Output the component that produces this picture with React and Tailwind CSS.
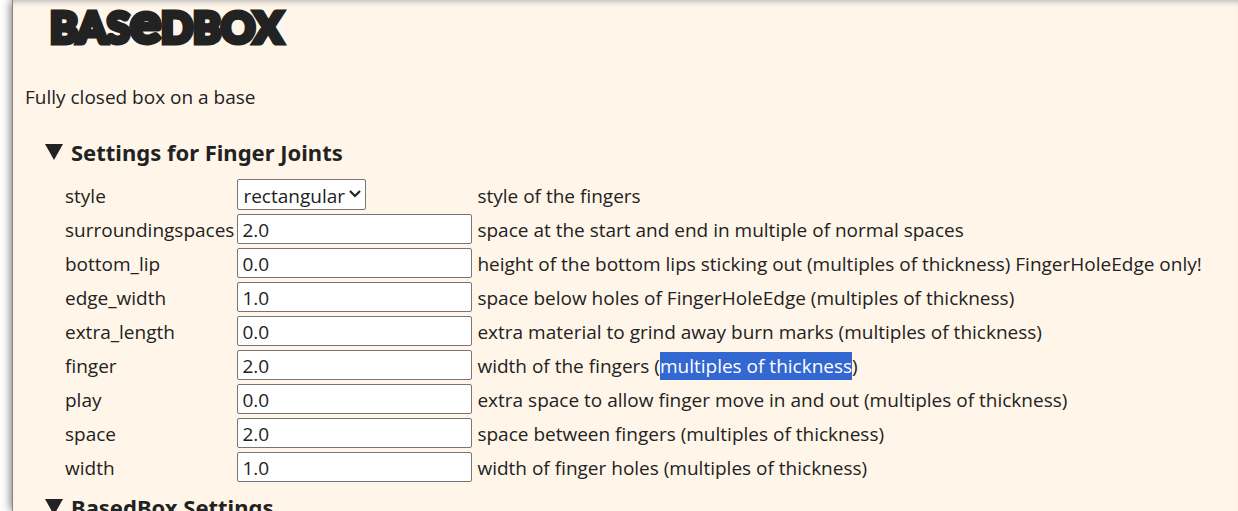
const fingerJoints = [
  { name: "surroundingspaces", value: "2.0", help: "space at the start and end in multiple of normal spaces" },
  { name: "bottom_lip", value: "0.0", help: "height of the bottom lips sticking out (multiples of thickness) FingerHoleEdge only!" },
  { name: "edge_width", value: "1.0", help: "space below holes of FingerHoleEdge (multiples of thickness)" },
  { name: "extra_length", value: "0.0", help: "extra material to grind away burn marks (multiples of thickness)" },
  {
    name: "finger",
    value: "2.0",
    help: (
      <>
        width of the fingers (
        <mark className="inline-block h-7 bg-[#3367d1] leading-7 text-white">multiples of thickness</mark>)
      </>
    ),
  },
  { name: "play", value: "0.0", help: "extra space to allow finger move in and out (multiples of thickness)" },
  { name: "space", value: "2.0", help: "space between fingers (multiples of thickness)" },
  { name: "width", value: "1.0", help: "width of finger holes (multiples of thickness)" },
];

function SectionHeading({ children }) {
  return (
    <h2>
      <button type="button" aria-expanded="true" className="flex h-8 items-center gap-2 font-['Noto_Sans',sans-serif] text-[22px] leading-8 font-bold">
        <svg viewBox="0 0 18 16" className="h-4 w-[18px]" fill="currentColor" aria-hidden="true">
          <path d="M0 0H18L9 16Z" />
        </svg>
        {children}
      </button>
    </h2>
  );
}

function Row({ name, help, children }) {
  return (
    <tr>
      <td className="pt-0.5">
        <label htmlFor={name}>{name}</label>
      </td>
      <td className="w-[237px] p-px">{children}</td>
      <td className="pt-0.5 pl-0.5 whitespace-nowrap">{help}</td>
    </tr>
  );
}

export default function App() {
  return (
    <div className="h-screen overflow-hidden bg-white pl-3 font-['Open_Sans','Noto_Sans',sans-serif] text-[19px] leading-7 text-[#222]">
      <main className="h-full border-l border-[#888] bg-[#fff6e9] px-3 shadow-[0_0_10px_#555,inset_0_6px_6px_-5px_#aaa]">
        <h1 className="h-[54px] pl-[25px] font-['Lato',sans-serif] text-[42px] leading-[54px] font-black [-webkit-text-stroke:5px_#222]">
          BAS<span className="text-[58px] leading-[0px]">e</span>DBOX
        </h1>
        <p className="mt-[29px]">Fully closed box on a base</p>
        <section className="mt-[25px] pl-5">
          <SectionHeading>Settings for Finger Joints</SectionHeading>
          <table className="mt-2 ml-[18px] border-separate border-spacing-[2px]">
            <tbody>
              <Row name="style" help="style of the fingers">
                <span className="relative flex w-[129px]">
                  <select id="style" className="h-[31px] w-full appearance-none rounded-xs border border-[#767676] bg-white pt-0.5 pl-[5px]" defaultValue="rectangular">
                    <option>rectangular</option>
                  </select>
                  <svg viewBox="0 0 12 8" className="pointer-events-none absolute top-[11px] right-[5px] h-2 w-3" fill="none" stroke="#222" strokeWidth="2.2" aria-hidden="true">
                    <path d="M1 1L6 6L11 1" />
                  </svg>
                </span>
              </Row>
              {fingerJoints.map(({ name, value, help }) => (
                <Row key={name} name={name} help={help}>
                  <input id={name} type="text" defaultValue={value} className="block h-[30px] w-full rounded-xs border border-[#767676] bg-white px-1 pt-0.5" />
                </Row>
              ))}
            </tbody>
          </table>
        </section>
        <section className="mt-1.5 pl-5">
          <SectionHeading>BasedBox Settings</SectionHeading>
        </section>
      </main>
    </div>
  );
}
